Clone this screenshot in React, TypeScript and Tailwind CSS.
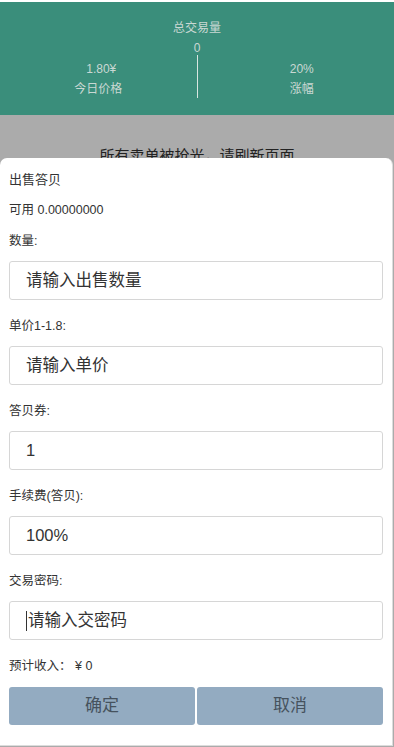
import React from 'react'

const font = { fontFamily: '"Liberation Sans", "Noto Sans CJK SC", sans-serif' }

function Field({ label, value, caret, first }: { label: string; value: string; caret?: boolean; first?: boolean }) {
    return (
        <>
            <div className={`${first ? 'mt-[11px]' : 'mt-[16px]'} h-[20px] text-[12.5px] leading-[20px] text-[#333]`}>{label}</div>
            <div className="mt-[10px] flex h-[39px] items-center rounded-[3px] border border-[#d6d6d6] bg-white pl-[16px] text-[16.5px] text-[#333]">
                {caret && <span className="mr-[1px] h-[20px] w-px bg-[#333]" />}
                {value}
            </div>
        </>
    )
}

export default function App() {
    return (
        <div className="relative h-[747px] w-[394px] overflow-hidden bg-white" style={font}>
            <div className="mt-[2px] flex h-[113px] flex-col items-center bg-[#3a8e7b] pt-[17px] text-[12px] text-[#c9d8d3]">
                <div className="leading-[18px]">总交易量</div>
                <div className="mt-[2px] leading-[18px]">0</div>
                <div className="flex w-full">
                    <div className="flex flex-1 flex-col items-center pt-[2px] leading-[20px]">
                        <div className="pl-[6px]">1.80¥</div>
                        <div>今日价格</div>
                    </div>
                    <div className="mt-[-2px] h-[43px] w-px bg-[#d8e6e1]" />
                    <div className="flex flex-1 flex-col items-center pt-[2px] leading-[20px]">
                        <div className="pl-[12px]">20%</div>
                        <div className="pl-[12px]">涨幅</div>
                    </div>
                </div>
            </div>
            <div className="h-[632px] bg-[#ababab] pt-[30px] text-center text-[15px] text-[#222]">所有卖单被抢光，请刷新页面</div>

            <div className="absolute left-0 top-[158px] h-[588px] w-[393px] rounded-t-[7px] border-r border-b border-[#dcdcdc] bg-white px-[9px] text-[#333]">
                <div className="mt-[12px] h-[20px] text-[13px] leading-[20px]">出售答贝</div>
                <div className="mt-[10px] h-[20px] text-[12.5px] leading-[20px]">可用 0.00000000</div>
                <Field label="数量:" value="请输入出售数量" first />
                <Field label="单价1-1.8:" value="请输入单价" />
                <Field label="答贝券:" value="1" />
                <Field label="手续费(答贝):" value="100%" />
                <Field label="交易密码:" value="请输入交密码" caret />
                <div className="mt-[16px] h-[20px] text-[12.5px] leading-[20px]">预计收入： ¥ 0</div>
                <div className="mt-[11px] flex gap-[2px]">
                    <button className="h-[38px] flex-1 rounded-[3px] bg-[#93abc1] text-[17px] text-[#46525d]">确定</button>
                    <button className="h-[38px] flex-1 rounded-[3px] bg-[#93abc1] text-[17px] text-[#46525d]">取消</button>
                </div>
            </div>
        </div>
    )
}
